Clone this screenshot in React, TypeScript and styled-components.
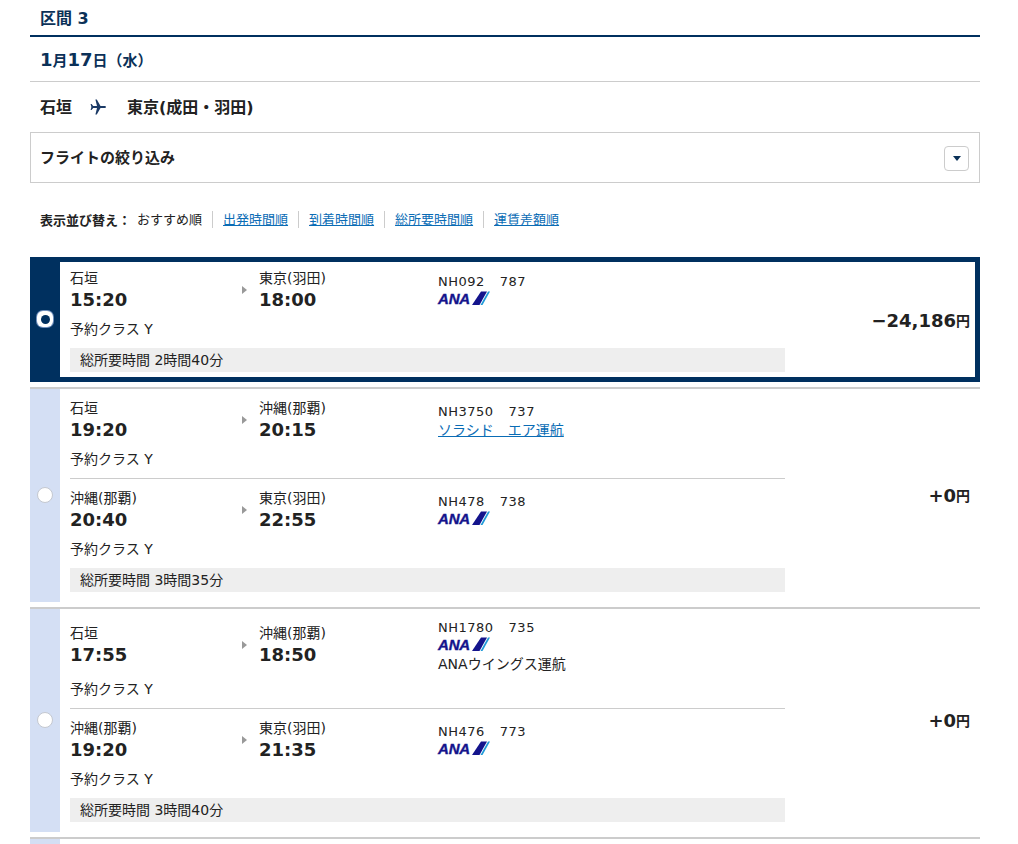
import React from 'react';
import styled, { createGlobalStyle } from 'styled-components';

const GlobalStyle = createGlobalStyle`
  html, body {
    margin: 0;
    padding: 0;
    background: #fff;
    overflow: hidden;
  }
  body {
    font-family: "DejaVu Sans", "Noto Sans CJK JP", sans-serif;
    color: #222;
  }
`;

const navy = '#00305f';

const Page = styled.div`
  width: 950px;
  margin: 0 0 0 30px;
`;

const SectionTitle = styled.h2`
  margin: 0;
  height: 35px;
  padding: 2px 10px 0;
  box-sizing: border-box;
  line-height: 33px;
  font-size: 16px;
  font-weight: bold;
  color: #0b3158;
`;

const TitleRule = styled.div`
  height: 2px;
  background: ${navy};
`;

const DateLine = styled.div`
  height: 44px;
  padding: 0 10px;
  display: flex;
  align-items: center;
  font-size: 18px;
  font-weight: bold;
  color: #0b3158;
  border-bottom: 1px solid #ccc;
`;

const DateSmall = styled.span`
  font-size: 15px;
`;

const Route = styled.div`
  height: 50px;
  padding: 0 10px 2px;
  box-sizing: border-box;
  display: flex;
  align-items: center;
  font-size: 16px;
  font-weight: bold;
`;

const PlaneIcon = styled.svg`
  width: 16px;
  height: 16px;
  margin: 2px 21px 0 18px;
  fill: #1b3a66;
`;

const Filter = styled.div`
  height: 51px;
  box-sizing: border-box;
  border: 1px solid #ccc;
  padding: 0 10px 2px 9px;
  display: flex;
  align-items: center;
  justify-content: space-between;
  font-size: 15px;
  font-weight: bold;
`;

const FilterButton = styled.button`
  width: 25px;
  height: 25px;
  padding: 0;
  margin-top: 3px;
  box-sizing: border-box;
  border: 1px solid #ccc;
  border-radius: 4px;
  background: #fff;
  display: flex;
  align-items: center;
  justify-content: center;

  &::after {
    content: '';
    border-style: solid;
    border-width: 5px 4.5px 0;
    border-color: #0b3158 transparent transparent;
  }
`;

const SortBar = styled.div`
  height: 74px;
  padding: 0 10px 2px;
  box-sizing: border-box;
  display: flex;
  align-items: center;
  font-size: 13px;
`;

const SortLabel = styled.span`
  font-weight: bold;
  margin-right: 6px;
`;

const SortItem = styled.span`
  padding-right: 10px;
  margin-right: 10px;
  border-right: 1px solid #ccc;
  line-height: 17px;

  &:last-child {
    border-right: 0;
  }
`;

const SortLink = styled.a`
  color: #0a6cb5;
  text-decoration: underline;
`;

const Card = styled.div<{ $selected?: boolean }>`
  display: flex;
  box-sizing: border-box;
  margin-top: 5px;
  border-top: 2px solid #ccc;
  ${p =>
    p.$selected &&
    `
    margin-top: 0;
    border: 5px solid ${navy};
    border-left: 0;
  `}
`;

const StubCard = styled(Card)`
  height: 7px;
`;

const Rail = styled.div<{ $selected?: boolean }>`
  width: 30px;
  flex-shrink: 0;
  display: flex;
  align-items: center;
  justify-content: center;
  background: ${p => (p.$selected ? navy : '#d4dff4')};
  ${p => p.$selected && 'margin: -5px 0;'}
`;

const Radio = styled.span<{ $selected?: boolean }>`
  width: 16px;
  height: 16px;
  box-sizing: border-box;
  border-radius: 50%;
  margin-top: -2px;
  background: #fff;
  border: 1px solid #c4c8d0;
  display: flex;
  align-items: center;
  justify-content: center;
  ${p =>
    p.$selected &&
    `
    border-radius: 6px;
    border: 0;
    box-shadow: 0 0 0 1px #6f8fbd;
    margin-top: -1px;

    &::after {
      content: '';
      width: 9px;
      height: 9px;
      border-radius: 50%;
      background: ${navy};
    }
  `}
`;

const Content = styled.div<{ $selected?: boolean }>`
  width: 715px;
  margin-left: 10px;
  padding: ${p => (p.$selected ? '6px 0 5px' : '9px 0 10px')};
`;

const Segment = styled.div`
  & + & {
    border-top: 1px solid #ccc;
    margin-top: 9px;
    padding-top: 9px;
  }
`;

const SegmentMain = styled.div`
  display: grid;
  grid-template-columns: 171px 18px 179px 1fr;
  align-items: center;
`;

const Place = styled.div`
  font-size: 14px;
  line-height: 20px;
  height: 20px;
`;

const Time = styled.div`
  font-size: 18px;
  font-weight: bold;
  line-height: 24px;
  height: 24px;
`;

const Arrow = styled.span`
  width: 0;
  height: 0;
  border-style: solid;
  border-width: 4.5px 0 4.5px 5px;
  border-color: transparent transparent transparent #999;
  margin-left: 1px;
`;

const FlightInfo = styled.div`
  font-size: 13px;
  padding: 2px 0 3px;
`;

const FlightNo = styled.div`
  display: flex;
  gap: 15px;
  line-height: 16px;
  letter-spacing: 0.5px;
`;

const OperatorLink = styled.a`
  display: block;
  margin: 3px 0 -2px;
  font-size: 14px;
  line-height: 14px;
  color: #0a6cb5;
  text-decoration: underline;
`;

const Operator = styled.div`
  margin: 5px 0 -3px;
  font-size: 14px;
  line-height: 16px;
`;

const Logo = styled.div`
  display: flex;
  align-items: flex-end;
  width: 52px;
  height: 14px;
  margin-top: 1px;
`;

const LogoText = styled.span`
  width: 34px;
  font-family: "Liberation Sans", sans-serif;
  font-size: 15px;
  font-weight: bold;
  font-style: italic;
  line-height: 13px;
  letter-spacing: -0.2px;
  color: #14148c;
  -webkit-text-stroke: 0.4px #14148c;
`;

const LogoStripes = styled.svg`
  width: 18px;
  height: 14px;
  flex-shrink: 0;
`;

const ClassLine = styled.div`
  margin-top: 7px;
  font-size: 14px;
  line-height: 20px;
`;

const Duration = styled.div`
  margin-top: 9px;
  height: 24px;
  padding-left: 10px;
  background: #eee;
  font-size: 14px;
  line-height: 24px;
`;

const Price = styled.div<{ $selected?: boolean }>`
  flex: 1;
  display: flex;
  align-items: center;
  justify-content: flex-end;
  padding-right: ${p => (p.$selected ? '5px' : '10px')};
  padding-top: ${p => (p.$selected ? '1px' : '0')};
  padding-bottom: ${p => (p.$selected ? '0' : '1px')};
  font-size: 18px;
  font-weight: bold;
`;

const Yen = styled.span`
  font-size: 14px;
`;

const AnaLogo = () => (
  <Logo>
    <LogoText>ANA</LogoText>
    <LogoStripes viewBox="0 0 18 14">
      <polygon points="0,14 9,0.5 15,0.5 7.5,14" fill="#14148c" />
      <polygon points="8.5,14 16,0.5 18,0.5 10.5,14" fill="#1f9ad8" />
    </LogoStripes>
  </Logo>
);

interface Leg {
  from: string;
  dep: string;
  to: string;
  arr: string;
  flight: string;
  craft: string;
  operator?: { name: string; link?: boolean };
  hideLogo?: boolean;
}

interface Offer {
  legs: Leg[];
  total: string;
  price: string;
  selected?: boolean;
}

const offers: Offer[] = [
  {
    selected: true,
    total: '総所要時間 2時間40分',
    price: '−24,186',
    legs: [{ from: '石垣', dep: '15:20', to: '東京(羽田)', arr: '18:00', flight: 'NH092', craft: '787' }],
  },
  {
    total: '総所要時間 3時間35分',
    price: '+0',
    legs: [
      {
        from: '石垣',
        dep: '19:20',
        to: '沖縄(那覇)',
        arr: '20:15',
        flight: 'NH3750',
        craft: '737',
        hideLogo: true,
        operator: { name: 'ソラシド　エア運航', link: true },
      },
      { from: '沖縄(那覇)', dep: '20:40', to: '東京(羽田)', arr: '22:55', flight: 'NH478', craft: '738' },
    ],
  },
  {
    total: '総所要時間 3時間40分',
    price: '+0',
    legs: [
      {
        from: '石垣',
        dep: '17:55',
        to: '沖縄(那覇)',
        arr: '18:50',
        flight: 'NH1780',
        craft: '735',
        operator: { name: 'ANAウイングス運航' },
      },
      { from: '沖縄(那覇)', dep: '19:20', to: '東京(羽田)', arr: '21:35', flight: 'NH476', craft: '773' },
    ],
  },
];

const sorts = ['出発時間順', '到着時間順', '総所要時間順', '運賃差額順'];

export default function App() {
  return (
    <Page>
      <GlobalStyle />
      <SectionTitle>区間 3</SectionTitle>
      <TitleRule />
      <DateLine>
        1<DateSmall>月</DateSmall>17<DateSmall>日（水）</DateSmall>
      </DateLine>
      <Route>
        石垣
        <PlaneIcon viewBox="0 0 16 16">
          <path d="M16 8c0 .6-.8 1-1.6 1h-3.9l-3.7 6.5H5.4L7 9H3.2l-1.6 2H.6l.8-3-.8-3h1l1.6 2H7L5.4.5h1.4L10.5 7h3.9c.8 0 1.6.4 1.6 1z" />
        </PlaneIcon>
        東京(成田・羽田)
      </Route>
      <Filter>
        フライトの絞り込み
        <FilterButton aria-label="開く" />
      </Filter>
      <SortBar>
        <SortLabel>表示並び替え：</SortLabel>
        <SortItem>おすすめ順</SortItem>
        {sorts.map(s => (
          <SortItem key={s}>
            <SortLink href="#">{s}</SortLink>
          </SortItem>
        ))}
      </SortBar>
      {offers.map(offer => (
        <Card key={offer.legs[0].flight} $selected={offer.selected}>
          <Rail $selected={offer.selected}>
            <Radio $selected={offer.selected} />
          </Rail>
          <Content $selected={offer.selected}>
            {offer.legs.map(leg => (
              <Segment key={leg.flight}>
                <SegmentMain>
                  <div>
                    <Place>{leg.from}</Place>
                    <Time>{leg.dep}</Time>
                  </div>
                  <Arrow />
                  <div>
                    <Place>{leg.to}</Place>
                    <Time>{leg.arr}</Time>
                  </div>
                  <FlightInfo>
                    <FlightNo>
                      <span>{leg.flight}</span>
                      <span>{leg.craft}</span>
                    </FlightNo>
                    {!leg.hideLogo && <AnaLogo />}
                    {leg.operator &&
                      (leg.operator.link ? (
                        <OperatorLink href="#">{leg.operator.name}</OperatorLink>
                      ) : (
                        <Operator>{leg.operator.name}</Operator>
                      ))}
                  </FlightInfo>
                </SegmentMain>
                <ClassLine>予約クラス Y</ClassLine>
              </Segment>
            ))}
            <Duration>{offer.total}</Duration>
          </Content>
          <Price $selected={offer.selected}>
            {offer.price}
            <Yen>円</Yen>
          </Price>
        </Card>
      ))}
      <StubCard>
        <Rail />
      </StubCard>
    </Page>
  );
}
